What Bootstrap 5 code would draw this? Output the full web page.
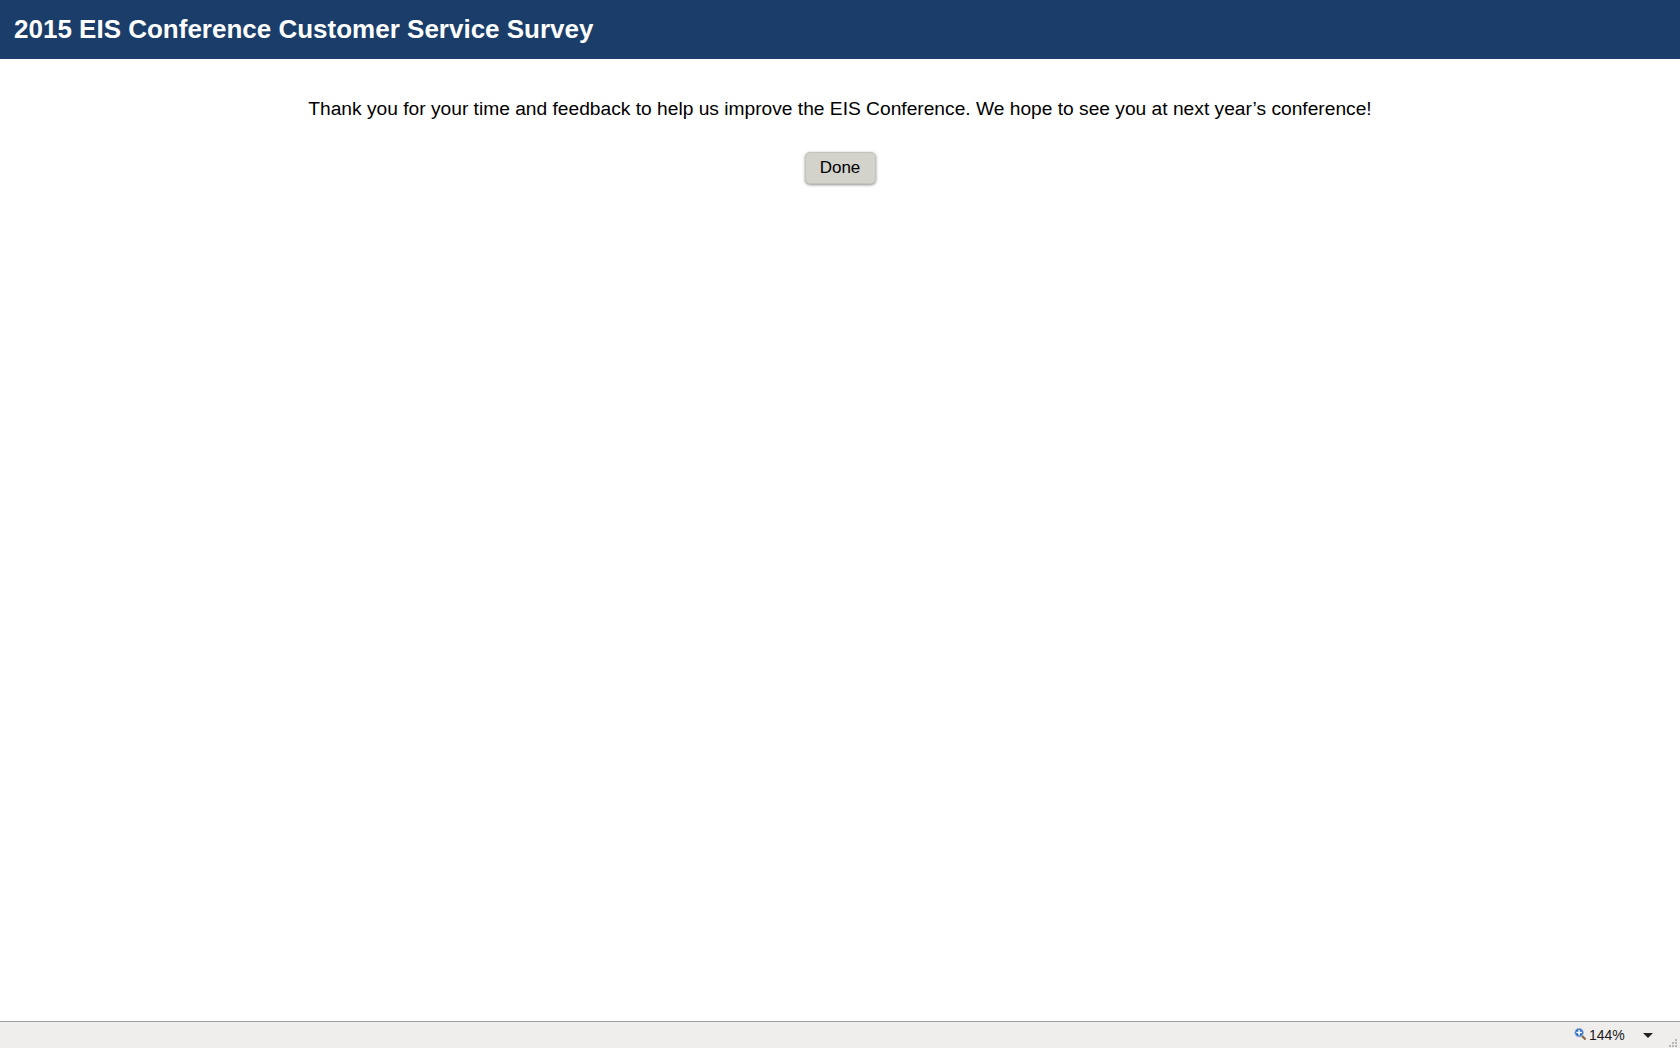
<!DOCTYPE html>
<html lang="en">
<head>
    <meta charset="UTF-8">
    <meta name="viewport" content="width=device-width, initial-scale=1.0">
    <title>2015 EIS Conference Customer Service Survey</title>
    <link href="https://cdn.jsdelivr.net/npm/bootstrap@5.3.0/dist/css/bootstrap.min.css" rel="stylesheet">
    <style>
        html, body {
            height: 100%;
        }
        body {
            font-family: "Liberation Sans", Arial, sans-serif;
            color: #000;
            overflow: hidden;
        }
        .survey-header {
            background-color: #1a3d6a;
            height: 59px;
            padding-left: 14px;
        }
        .survey-title {
            font-size: 26px;
            font-weight: bold;
            color: #fff;
            margin: 0;
        }
        .survey-text {
            font-size: 19.2px;
            line-height: 24px;
            margin: 0;
            padding-top: 38px;
        }
        .done-btn {
            font-size: 17px;
            line-height: 20px;
            color: #000;
            background-color: #d3d3cc;
            border: 1px solid #c4c4bd;
            border-radius: 5px;
            box-shadow: 0 1px 3px rgba(0, 0, 0, 0.45);
            width: 71px;
            height: 32px;
            padding: 0;
            margin-top: 31px;
        }
        .status-bar {
            background-color: #f0eded;
            border-top: 1px solid #a0a0a0;
            height: 27px;
            margin-bottom: 2px;
            font-size: 14px;
            color: #1b1b1b;
        }
        .zoom-icon {
            margin-right: 2px;
            margin-bottom: 2px;
        }
        .zoom-level {
            width: 36px;
        }
        .zoom-arrow {
            width: 0;
            height: 0;
            border-left: 5px solid transparent;
            border-right: 5px solid transparent;
            border-top: 5px solid #222;
            margin-left: 18px;
            margin-right: 1px;
        }
        .resize-grip {
            margin-left: 15px;
            margin-right: 2px;
        }
    </style>
</head>
<body class="d-flex flex-column">
    <div class="survey-header d-flex align-items-center">
        <h1 class="survey-title">2015 EIS Conference Customer Service Survey</h1>
    </div>

    <div class="flex-grow-1 text-center">
        <p class="survey-text">Thank you for your time and feedback to help us improve the EIS Conference. We hope to see you at next year’s conference!</p>
        <button type="button" class="btn done-btn">Done</button>
    </div>

    <!-- browser status bar -->
    <div class="status-bar d-flex align-items-center justify-content-end">
        <svg width="13" height="14" viewBox="0 0 14 14" class="zoom-icon">
            <line x1="8.5" y1="9" x2="12.5" y2="13" stroke="#8a6a45" stroke-width="2.4"/>
            <circle cx="5.5" cy="5.5" r="4.6" fill="#2a6cc4" stroke="#a9bbcd"/>
            <path d="M5.5 2.5v6M2.5 5.5h6" stroke="#fff" stroke-width="1.6"/>
        </svg>
        <span class="zoom-level">144%</span>
        <span class="zoom-arrow"></span>
        <svg width="9" height="9" viewBox="0 0 9 9" class="resize-grip align-self-end" fill="#b5b5b5">
            <rect x="6" y="0" width="2" height="2"/>
            <rect x="3" y="3" width="2" height="2"/>
            <rect x="6" y="3" width="2" height="2"/>
            <rect x="0" y="6" width="2" height="2"/>
            <rect x="3" y="6" width="2" height="2"/>
            <rect x="6" y="6" width="2" height="2"/>
        </svg>
    </div>

    <script src="https://cdn.jsdelivr.net/npm/bootstrap@5.3.0/dist/js/bootstrap.bundle.min.js"></script>
</body>
</html>
